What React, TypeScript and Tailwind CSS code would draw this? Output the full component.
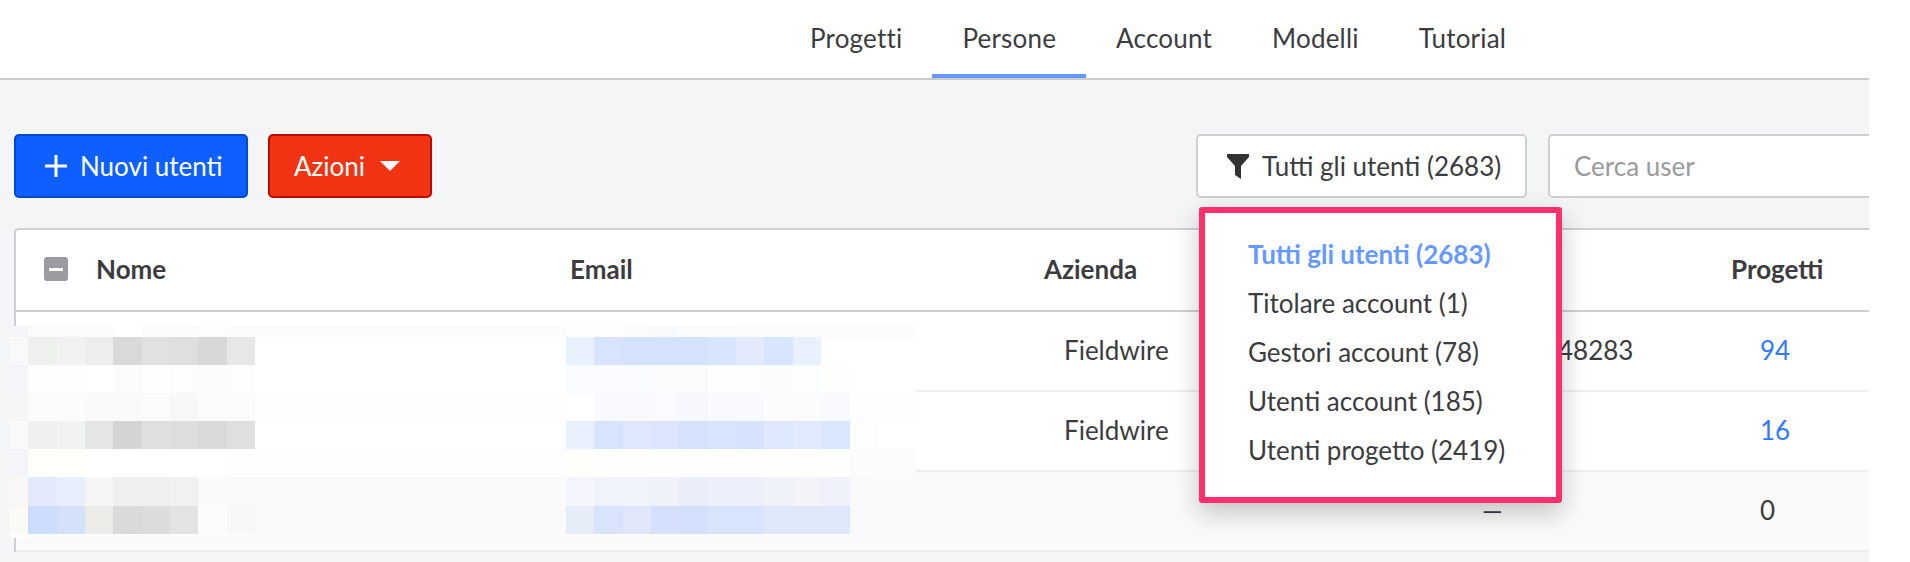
import React from 'react';

const tabs = ['Progetti', 'Persone', 'Account', 'Modelli', 'Tutorial'];

const filters = [
    'Tutti gli utenti (2683)',
    'Titolare account (1)',
    'Gestori account (78)',
    'Utenti account (185)',
    'Utenti progetto (2419)',
];

// censored names and emails: one row of colours per mosaic band
const mosaic: string[][] = [
    ['#f3f5f8', '#fbfbfb', '#fbfbfb', '#fbfbfb', '#ffffff', '#fbfbfb', '#fbfbfb', '#fdfdfd', '#fcfcfc', '#fcfcfc', '#fefefe', '#fefefe', '#fafbfd', '#f9fafc', '#fcfcfc', '#fcfcfc', '#fbfbfb', '#fbfbfb', '#fbfbfb', '#fbfbfb', '#fbfbfb', '#fbfbfb'],
    ['#f9f9f9', '#eef0ee', '#f2f2f2', '#ededed', '#d9d9d9', '#e1e1e1', '#dfdfdf', '#d8d8d8', '#e7e7e5', '#ffffff', '#e9f0fe', '#d8e4fe', '#d5e2fe', '#d4e2fe', '#d4e2fe', '#d8e5fe', '#e3eafc', '#d8e5fe', '#e9f0fe', '#ffffff', '#ffffff', '#ffffff'],
    ['#f3f5f8', '#fdfdfd', '#fdfdfd', '#ffffff', '#fcfcfc', '#fefefe', '#fdfdfd', '#fbfbfb', '#fdfdfd', '#ffffff', '#fafbfe', '#fafbfe', '#fafbfe', '#fcfcfe', '#fbfbfe', '#fcfdfe', '#fcfdfe', '#fbfcfe', '#fcfdfe', '#fefefc', '#ffffff', '#ffffff'],
    ['#f4f6f8', '#fbfbfb', '#fcfcfc', '#fafafa', '#fafafa', '#fbfbfb', '#f8f8f8', '#fbfbfb', '#fbfbfb', '#fefefe', '#fefffe', '#f9fafe', '#f9fafe', '#fafbfe', '#f7f8fd', '#f9fafe', '#f9fafe', '#fafcfe', '#fbfcfe', '#f9fafe', '#fefefe', '#fefefe'],
    ['#f9f9f9', '#eeeff1', '#f1f2f4', '#e6e6e6', '#d4d4d4', '#e0e0e0', '#dedede', '#d9d9d9', '#e0e0e0', '#ffffff', '#eaf0fe', '#d8e4fd', '#dde7fd', '#dbe5fd', '#d5e2fe', '#d7e4fe', '#d5e3fe', '#dee8fe', '#e1eafe', '#dae6fe', '#fdfdfd', '#ffffff'],
    ['#f3f5f8', '#fffffb', '#fffffb', '#ffffff', '#ffffff', '#ffffff', '#ffffff', '#ffffff', '#fefefe', '#fefefe', '#fefefb', '#fefefd', '#fefefd', '#fefefd', '#fefefd', '#fefefd', '#fefefd', '#fefefd', '#fefefd', '#fefefc', '#fcfcfc', '#fcfcfc'],
    ['#f8f7f6', '#e4eafb', '#e8eefb', '#f6f6f4', '#efefef', '#efefef', '#f1f1f1', '#fafafa', '#f9f9fb', '#fafafa', '#f5f6fb', '#eff3fb', '#f0f3fb', '#eff2fa', '#eaeefa', '#edf0fa', '#edf0fa', '#f0f2fa', '#f3f4fa', '#eff2fb', '#f9f9fb', '#fafafa'],
    ['#fcfaf6', '#cbdcfc', '#d3e1fb', '#ecebe7', '#d9dadb', '#dcdcdc', '#e3e3e3', '#fcfcfc', '#f8f8f8', '#fafafa', '#e6edf9', '#d7e4fc', '#e0e7fb', '#d5e1fc', '#d3e0fb', '#d8e4fb', '#d8e4fb', '#dfe7fa', '#dfe7fa', '#dfe7fa', '#f9f9fb', '#fafafa'],
    ['#fefefe', '#fcfcfb', '#fcfcfb', '#fcfcfb', '#fcfcfb', '#fcfcfb', '#fcfcfb', '#fcfcfb', '#fcfcfb', '#fbfbfb', '#fdfcf9', '#fdfcf9', '#fdfcf9', '#fdfcf9', '#fdfcf9', '#fdfcf9', '#fdfcf9', '#fdfcf9', '#fdfcf9', '#fdfcf9', '#fbfbfb', '#fbfbfb'],
];

const rowGrid = 'grid grid-cols-[554px_474px_438px_249px_138px] items-center';

const TableRow = ({ azienda, phone, count, shaded }: { azienda?: string; phone?: string; count?: string; shaded?: boolean }) => (
    <div className={`${rowGrid} h-[80px] border-b-2 border-[#eeeef0] pb-[2px] ${shaded ? 'bg-[#fafafa]' : 'bg-white'}`}>
        <div />
        <div />
        <div className="pl-5">{azienda}</div>
        {/* start of the number sits behind the open menu */}
        <div className={`whitespace-nowrap ${shaded ? '' : 'pl-[76px]'}`}>{phone}</div>
        <div className={`pl-[29px] ${shaded ? '' : 'text-[#3377ff]'}`}>{count}</div>
    </div>
);

export default function App() {
    return (
        <div className="relative h-[562px] w-[1869px] overflow-hidden bg-[#f4f5f7] font-['Lato',sans-serif] text-[26px] text-[#3c3c3e]">

            {/* top tabs */}
            <div className="flex h-[80px] items-stretch border-b-2 border-[#cccccc] bg-white pl-[780px] tracking-[0.2px]">
                {tabs.map((tab) => (
                    <div
                        key={tab}
                        className={`flex items-center border-b-4 px-[30px] pt-[2px] ${tab === 'Persone' ? 'border-[#6699ff]' : 'border-transparent'}`}
                    >
                        {tab}
                    </div>
                ))}
            </div>

            {/* toolbar */}
            <div className="flex pl-[14px] pt-[54px]">
                <button className="flex h-[64px] w-[234px] shrink-0 items-center whitespace-nowrap rounded-[5px] border-2 border-[#0049cc] bg-[#0d60ff] pl-[29px] text-white">
                    <svg width="22" height="22" viewBox="0 0 22 22" className="mr-[13px] shrink-0">
                        <path d="M11 0v22M0 11h22" stroke="#ffffff" strokeWidth="3" />
                    </svg>
                    Nuovi utenti
                </button>
                <button className="ml-5 flex h-[64px] w-[164px] shrink-0 items-center whitespace-nowrap rounded-[5px] border-2 border-[#bb0a00] bg-[#f03312] pl-[24px] text-white">
                    Azioni
                    <svg width="20" height="10" viewBox="0 0 20 10" className="ml-[15px] shrink-0">
                        <path d="M0 0h20L10 10z" fill="#ffffff" />
                    </svg>
                </button>

                <div className="relative ml-[764px] shrink-0">
                    <button className="flex h-[64px] w-[331px] items-center whitespace-nowrap rounded-[5px] border-2 border-[#cfcfd3] bg-white pl-[29px]">
                        <svg width="22" height="25" viewBox="0 0 22 25" className="mr-[13px] shrink-0">
                            <path d="M0 0h22v3l-8 9v13l-6-4v-9L0 3z" fill="#333335" />
                        </svg>
                        Tutti gli utenti (2683)
                    </button>

                    {/* open filter menu */}
                    <div className="absolute left-[3px] top-[73px] z-20 w-[363px] rounded-[3px] border-[6px] border-[#ff2e6c] bg-white pb-[22px] pl-[43px] pt-[17px] shadow-[0_10px_26px_rgba(0,0,0,0.22)]">
                        {filters.map((item, i) => (
                            <div
                                key={item}
                                className={`flex h-[49px] items-center whitespace-nowrap ${i === 0 ? 'font-bold text-[#6699ff]' : ''}`}
                            >
                                {item}
                            </div>
                        ))}
                    </div>
                </div>

                <div className="ml-[21px] flex h-[64px] w-[400px] shrink-0 items-center rounded-[5px] border-2 border-[#cfcfd3] bg-white pl-[24px] text-[#9a9a9c]">
                    Cerca user
                </div>
            </div>

            {/* users table */}
            <div className="ml-[14px] mt-[30px] w-[1855px] rounded-tl-[5px] border-l-2 border-t-2 border-[#cfcfd3] bg-white">
                <div className={`${rowGrid} h-[82px] border-b-2 border-[#cfcfd3] pb-[2px] font-bold`}>
                    <div className="flex items-center pl-[28px]">
                        <div className="mr-[28px] flex h-[24px] w-[24px] items-center justify-center rounded-[3px] bg-[#9b9ba0]">
                            <div className="h-[3px] w-[14px] bg-white" />
                        </div>
                        Nome
                    </div>
                    <div>Email</div>
                    <div>Azienda</div>
                    <div />
                    <div>Progetti</div>
                </div>
                <TableRow azienda="Fieldwire" phone="48283" count="94" />
                <TableRow azienda="Fieldwire" count="16" />
                <TableRow phone="—" count="0" shaded />
            </div>

            {/* censored area lies over the first rows */}
            <div className="absolute left-[9px] top-[326px] z-10 grid grid-cols-[19px_29px_28px_28px_29px_28px_28px_29px_28px_311px_28px_29px_28px_28px_29px_28px_28px_29px_28px_29px_28px_37px] grid-rows-[11px_28px_28px_28px_28px_28px_29px_28px_4px]">
                {mosaic.flatMap((row, r) =>
                    row.map((color, c) => <div key={`${r}-${c}`} style={{ backgroundColor: color }} />)
                )}
            </div>
        </div>
    );
}
